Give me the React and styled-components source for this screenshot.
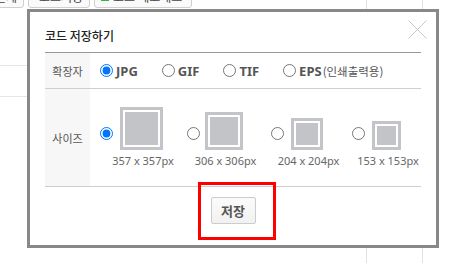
import React, { useState } from "react";
import styled, { createGlobalStyle } from "styled-components";

const Global = createGlobalStyle`
  html, body { margin: 0; padding: 0; background: #fff; }
  body { font-family: "Noto Sans", "Noto Sans CJK KR", sans-serif; overflow: hidden; }
  * { box-sizing: border-box; }
`;

const Page = styled.div`
  position: relative;
  width: 468px;
  height: 263px;
  overflow: hidden;
`;

const BgGrid = styled.div`
  display: grid;
  grid-template-columns: 366px 56px 1fr;
  height: 263px;
`;

const BgCol = styled.div`
  border-left: ${(p) => (p.$line ? "1px solid #e2e2e2" : "none")};
  display: flex;
  flex-direction: column;
`;

const Toolbar = styled.div`
  display: flex;
  gap: 4px;
  margin-left: -12px;
  margin-top: -14px;
  height: 22px;
`;

const ToolButton = styled.div`
  height: 22px;
  width: ${(p) => p.$w}px;
  border: 1px solid #cfcfcf;
  border-radius: 3px;
  background: #fafafa;
  display: flex;
  align-items: center;
  gap: 4px;
  padding: 0 6px;
  font-size: 12px;
  color: #444;
  white-space: nowrap;
  overflow: hidden;
`;

const ToolIcon = styled.span`
  width: 8px;
  height: 8px;
  background: ${(p) => p.$c};
  display: inline-block;
`;

const BgRow = styled.div`
  height: ${(p) => p.$h}px;
  border-bottom: 1px solid #e6e6e6;
`;

const Modal = styled.div`
  position: absolute;
  left: 27px;
  top: 9px;
  width: 412px;
  height: 239px;
  border: 3px solid #888;
  background: #fff;
  padding: 0 15px;
  display: flex;
  flex-direction: column;
`;

const Header = styled.div`
  height: 41px;
  display: flex;
  align-items: center;
  border-bottom: 1px solid #999;
  padding-top: 6px;
`;

const Title = styled.h2`
  margin: 0;
  font-size: 12px;
  font-weight: 500;
  color: #222;
  font-family: "Noto Sans CJK KR", sans-serif;
`;

const CloseButton = styled.button`
  position: absolute;
  right: 8px;
  top: 7px;
  width: 21px;
  height: 21px;
  padding: 0;
  border: 0;
  background: none;
  cursor: pointer;
`;

const Row = styled.div`
  display: flex;
  height: ${(p) => p.$h}px;
  border-bottom: 1px solid #cfcfcf;
`;

const Label = styled.div`
  width: 45px;
  flex: none;
  background: #f7f7f7;
  display: flex;
  align-items: center;
  justify-content: center;
  font-size: 11px;
  color: #555;
  font-family: "Noto Sans CJK KR", sans-serif;
`;

const Options = styled.div`
  display: flex;
  align-items: center;
  padding-left: 10px;
  gap: ${(p) => p.$gap}px;
`;

const Radio = styled.input.attrs({ type: "radio" })`
  margin: 0;
  width: 13px;
  height: 13px;
  flex: none;
`;

const FormatOption = styled.label`
  display: flex;
  align-items: center;
  gap: 3px;
  cursor: pointer;
`;

const FormatText = styled.span`
  font-size: 13px;
  font-weight: 700;
  color: #555;
`;

const FormatNote = styled.span`
  font-size: 11.5px;
  font-weight: 400;
  color: #555;
  margin-left: 1px;
  font-family: "Noto Sans CJK KR", sans-serif;
`;

const SizeOption = styled.label`
  display: flex;
  align-items: flex-start;
  width: ${(p) => p.$w}px;
  flex: none;
  cursor: pointer;
`;

const SizeRadioWrap = styled.div`
  height: 43px;
  display: flex;
  align-items: flex-end;
  padding-bottom: 10px;
  margin-right: ${(p) => p.$gap}px;
`;

const SizeColumn = styled.div`
  width: ${(p) => p.$w}px;
  display: flex;
  flex-direction: column;
`;

const BoxSlot = styled.div`
  height: 43px;
  display: flex;
  align-items: flex-end;
`;

const Thumb = styled.div`
  width: ${(p) => p.$s}px;
  height: ${(p) => p.$s}px;
  border: 3px solid #c2c4c8;
  padding: 2px;
  background: #fff;
`;

const ThumbFill = styled.div`
  width: 100%;
  height: 100%;
  background: #c2c4c8;
`;

const SizeText = styled.div`
  margin: 3px -22px 0 -19px;
  text-align: center;
  font-size: 11px;
  line-height: 16px;
  color: #666;
  white-space: nowrap;
`;

const Footer = styled.div`
  position: relative;
  display: flex;
  justify-content: center;
  padding-top: 10px;
`;

const SaveButton = styled.button`
  width: 45px;
  height: 27px;
  border: 1px solid #ccc;
  border-radius: 2px;
  background: linear-gradient(#fbfbfb, #f1f1f1);
  font-family: "Noto Sans CJK KR", sans-serif;
  font-size: 13px;
  font-weight: 700;
  color: #555;
  padding: 0;
  cursor: pointer;
`;

const Highlight = styled.div`
  position: absolute;
  left: 153px;
  top: -5px;
  width: 78px;
  height: 58px;
  border: 3px solid #ff0000;
  pointer-events: none;
`;

const formats = [
  { id: "jpg", text: "JPG" },
  { id: "gif", text: "GIF" },
  { id: "tif", text: "TIF" },
  { id: "eps", text: "EPS", note: "(인쇄출력용)" },
];

const sizes = [
  { id: 357, box: 43, w: 87, gap: 7 },
  { id: 306, box: 38, w: 84, gap: 5 },
  { id: 204, box: 32, w: 81, gap: 7 },
  { id: 153, box: 29, w: 80, gap: 7 },
];

export default function App() {
  const [format, setFormat] = useState("jpg");
  const [size, setSize] = useState(357);

  return (
    <Page>
      <Global />
      <BgGrid>
        <BgCol>
          <Toolbar>
            <ToolButton $w={36}>전체</ToolButton>
            <ToolButton $w={62}>
              <ToolIcon $c="#999" />
              코드저장
            </ToolButton>
            <ToolButton $w={98}>
              <ToolIcon $c="#3cb33c" />
              코드 메모패드
            </ToolButton>
          </Toolbar>
          <BgRow $h={58} />
          <BgRow $h={31} />
        </BgCol>
        <BgCol $line />
        <BgCol $line />
      </BgGrid>

      <Modal role="dialog" aria-label="코드 저장하기">
        <Header>
          <Title>코드 저장하기</Title>
        </Header>
        <CloseButton aria-label="닫기">
          <svg width="21" height="21" viewBox="0 0 21 21">
            <path d="M1.5 1.5 L19.5 19.5 M19.5 1.5 L1.5 19.5" stroke="#c8c8c8" strokeWidth="1" fill="none" />
          </svg>
        </CloseButton>

        <Row $h={36}>
          <Label>확장자</Label>
          <Options $gap={24}>
            {formats.map((f) => (
              <FormatOption key={f.id}>
                <Radio
                  name="format"
                  checked={format === f.id}
                  onChange={() => setFormat(f.id)}
                />
                <FormatText>
                  {f.text}
                  {f.note && <FormatNote>{f.note}</FormatNote>}
                </FormatText>
              </FormatOption>
            ))}
          </Options>
        </Row>

        <Row $h={98}>
          <Label>사이즈</Label>
          <Options $gap={0}>
            {sizes.map((s) => (
              <SizeOption key={s.id} $w={s.w}>
                <SizeRadioWrap $gap={s.gap}>
                  <Radio
                    name="size"
                    checked={size === s.id}
                    onChange={() => setSize(s.id)}
                  />
                </SizeRadioWrap>
                <SizeColumn $w={s.box}>
                  <BoxSlot>
                    <Thumb $s={s.box}>
                      <ThumbFill />
                    </Thumb>
                  </BoxSlot>
                  <SizeText>
                    {s.id} x {s.id}px
                  </SizeText>
                </SizeColumn>
              </SizeOption>
            ))}
          </Options>
        </Row>

        <Footer>
          <SaveButton>저장</SaveButton>
          <Highlight />
        </Footer>
      </Modal>
    </Page>
  );
}
